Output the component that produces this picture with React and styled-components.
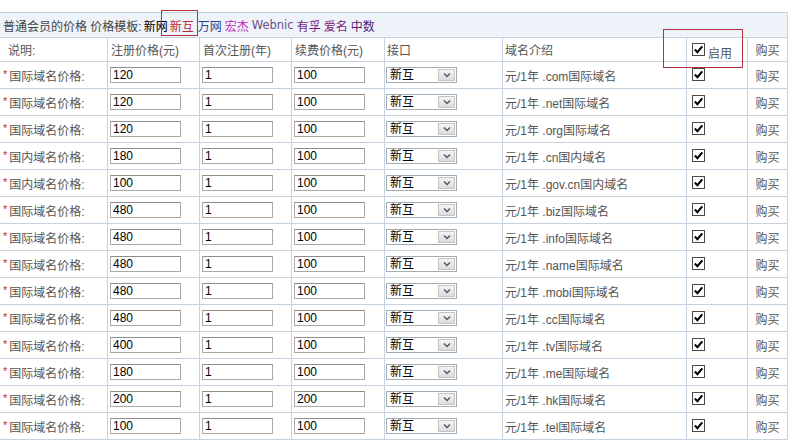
import React from "react";
import styled, { createGlobalStyle } from "styled-components";

const Global = createGlobalStyle`
  html, body { margin: 0; padding: 0; background: #fff; }
  body { font-family: "Liberation Sans", "Noto Sans CJK SC", sans-serif; font-size: 12px; color: #555; }
`;

const COLS = "108px 92px 92px 93px 118px 184px 61px 40px";
const LINE = "#c5d2df";

const Page = styled.div`
  position: relative;
  width: 793px;
  padding-top: 12px;
`;

const Table = styled.div`
  width: 788px;
`;

const TitleRow = styled.div`
  box-sizing: border-box;
  height: 26px;
  border-top: 1px solid ${LINE};
  border-bottom: 1px solid ${LINE};
  border-right: 1px solid ${LINE};
  background: #eef3fa;
  display: flex;
  align-items: center;
  padding-left: 3px;
  color: #444;
  white-space: nowrap;
`;

const Tpl = styled.span`
  color: ${(p) => p.$c};
  margin-left: ${(p) => p.$gap ?? 3}px;
  font-family: ${(p) => (p.$latin ? '"DejaVu Sans", sans-serif' : "inherit")};
  font-size: ${(p) => (p.$latin ? "11.5px" : "12px")};
`;

const Row = styled.div`
  box-sizing: border-box;
  display: grid;
  grid-template-columns: ${COLS};
  height: ${(p) => p.$h}px;
  border-bottom: 1px solid ${LINE};
`;

const Cell = styled.div`
  box-sizing: border-box;
  border-right: 1px solid ${LINE};
  display: flex;
  align-items: center;
  justify-content: ${(p) => (p.$center ? "center" : "flex-start")};
  padding-left: ${(p) => (p.$center ? 0 : p.$pl ?? 2)}px;
  white-space: nowrap;
  overflow: hidden;
  color: #555;
`;

const Star = styled.span`
  color: #c0283c;
  font-size: 11px;
  margin-right: 2px;
  position: relative;
  top: -1px;
`;

const TextInput = styled.input`
  box-sizing: border-box;
  width: 71px;
  height: 16px;
  border: 1px solid #a9a9a9;
  border-top-color: #8e8e8e;
  padding: 0 2px;
  margin: 0;
  font-family: "Liberation Sans", sans-serif;
  font-size: 12px;
  color: #000;
  background: #fff;
  outline: none;
`;

const SelectBox = styled.div`
  box-sizing: border-box;
  width: 71px;
  height: 16px;
  border: 1px solid #a5acb2;
  background: #fff;
  display: flex;
  align-items: stretch;
`;

const SelectText = styled.span`
  flex: 1;
  color: #000;
  font-size: 12px;
  line-height: 14px;
  padding-left: 3px;
`;

const SelectBtn = styled.span`
  width: 17px;
  margin: 1px;
  background: linear-gradient(#f4f4f4, #dcdcdc);
  border: 1px solid #c4c4c4;
  box-sizing: border-box;
  display: flex;
  align-items: center;
  justify-content: center;
`;

const CheckBox = styled.span`
  box-sizing: border-box;
  display: inline-flex;
  align-items: center;
  justify-content: center;
  width: 13px;
  height: 13px;
  border: 1px solid #4a4a4a;
  background: #fff;
  position: relative;
  top: ${(p) => p.$dy ?? -1}px;
`;

const CheckLabel = styled.span`
  margin-left: 3px;
  position: relative;
  top: 3px;
  color: #555;
`;

const Mark = styled.div`
  position: absolute;
  border: 1px solid #b3303d;
  box-sizing: border-box;
  left: ${(p) => p.$x}px;
  top: ${(p) => p.$y}px;
  width: ${(p) => p.$w}px;
  height: ${(p) => p.$h}px;
  pointer-events: none;
`;

const Check = ({ dy }) => (
  <CheckBox $dy={dy}>
    <svg width="11" height="11" viewBox="0 0 11 11">
      <path d="M1.8 5.6 L4.4 8.2 L9.3 2.4" fill="none" stroke="#000" strokeWidth="2.1" />
    </svg>
  </CheckBox>
);

const Select = () => (
  <SelectBox>
    <SelectText>新互</SelectText>
    <SelectBtn>
      <svg width="8" height="6" viewBox="0 0 8 6">
        <path d="M1 1.5 L4 4.5 L7 1.5" fill="none" stroke="#4d5a78" strokeWidth="1.5" />
      </svg>
    </SelectBtn>
  </SelectBox>
);

const rows = [
  ["国际", "120", "1", "100", ".com国际域名"],
  ["国际", "120", "1", "100", ".net国际域名"],
  ["国际", "120", "1", "100", ".org国际域名"],
  ["国内", "180", "1", "100", ".cn国内域名"],
  ["国内", "100", "1", "100", ".gov.cn国内域名"],
  ["国际", "480", "1", "100", ".biz国际域名"],
  ["国际", "480", "1", "100", ".info国际域名"],
  ["国际", "480", "1", "100", ".name国际域名"],
  ["国际", "480", "1", "100", ".mobi国际域名"],
  ["国际", "480", "1", "100", ".cc国际域名"],
  ["国际", "400", "1", "100", ".tv国际域名"],
  ["国际", "180", "1", "100", ".me国际域名"],
  ["国际", "200", "1", "200", ".hk国际域名"],
  ["国际", "100", "1", "100", ".tel国际域名"],
];

export default function App() {
  return (
    <>
      <Global />
      <Page>
        <Table>
          <TitleRow>
            普通会员的价格 价格模板:
            <Tpl $c="#000" $gap={2}>新网</Tpl>
            <Tpl $c="#c0283c" $gap={2}>新互</Tpl>
            <Tpl $c="#1f3f8f" $gap={4}>万网</Tpl>
            <Tpl $c="#c21fbf">宏杰</Tpl>
            <Tpl $c="#6b4f8a" $latin>Webnic</Tpl>
            <Tpl $c="#72207f">有孚</Tpl>
            <Tpl $c="#7d1f7a">爱名</Tpl>
            <Tpl $c="#55207a">中数</Tpl>
          </TitleRow>
          <Row $h={24}>
            <Cell $pl={8}>说明:</Cell>
            <Cell $pl={3}>注册价格(元)</Cell>
            <Cell $pl={3}>首次注册(年)</Cell>
            <Cell $pl={3}>续费价格(元)</Cell>
            <Cell $pl={2}>接口</Cell>
            <Cell $pl={2}>域名介绍</Cell>
            <Cell $pl={5}>
              <Check dy={0} />
              <CheckLabel>启用</CheckLabel>
            </Cell>
            <Cell $center>购买</Cell>
          </Row>
          {rows.map((r, i) => (
            <Row $h={27} key={i}>
              <Cell $pl={3}>
                <Star>*</Star>
                {r[0]}域名价格:
              </Cell>
              <Cell $pl={2}>
                <TextInput defaultValue={r[1]} />
              </Cell>
              <Cell $pl={2}>
                <TextInput defaultValue={r[2]} />
              </Cell>
              <Cell $pl={2}>
                <TextInput defaultValue={r[3]} />
              </Cell>
              <Cell $pl={1}>
                <Select />
              </Cell>
              <Cell $pl={2}>元/1年 {r[4]}</Cell>
              <Cell $pl={5}>
                <Check />
              </Cell>
              <Cell $center>购买</Cell>
            </Row>
          ))}
        </Table>
        <Mark $x={161} $y={10} $w={37} $h={26} />
        <Mark $x={663} $y={29} $w={80} $h={39} />
      </Page>
    </>
  );
}
